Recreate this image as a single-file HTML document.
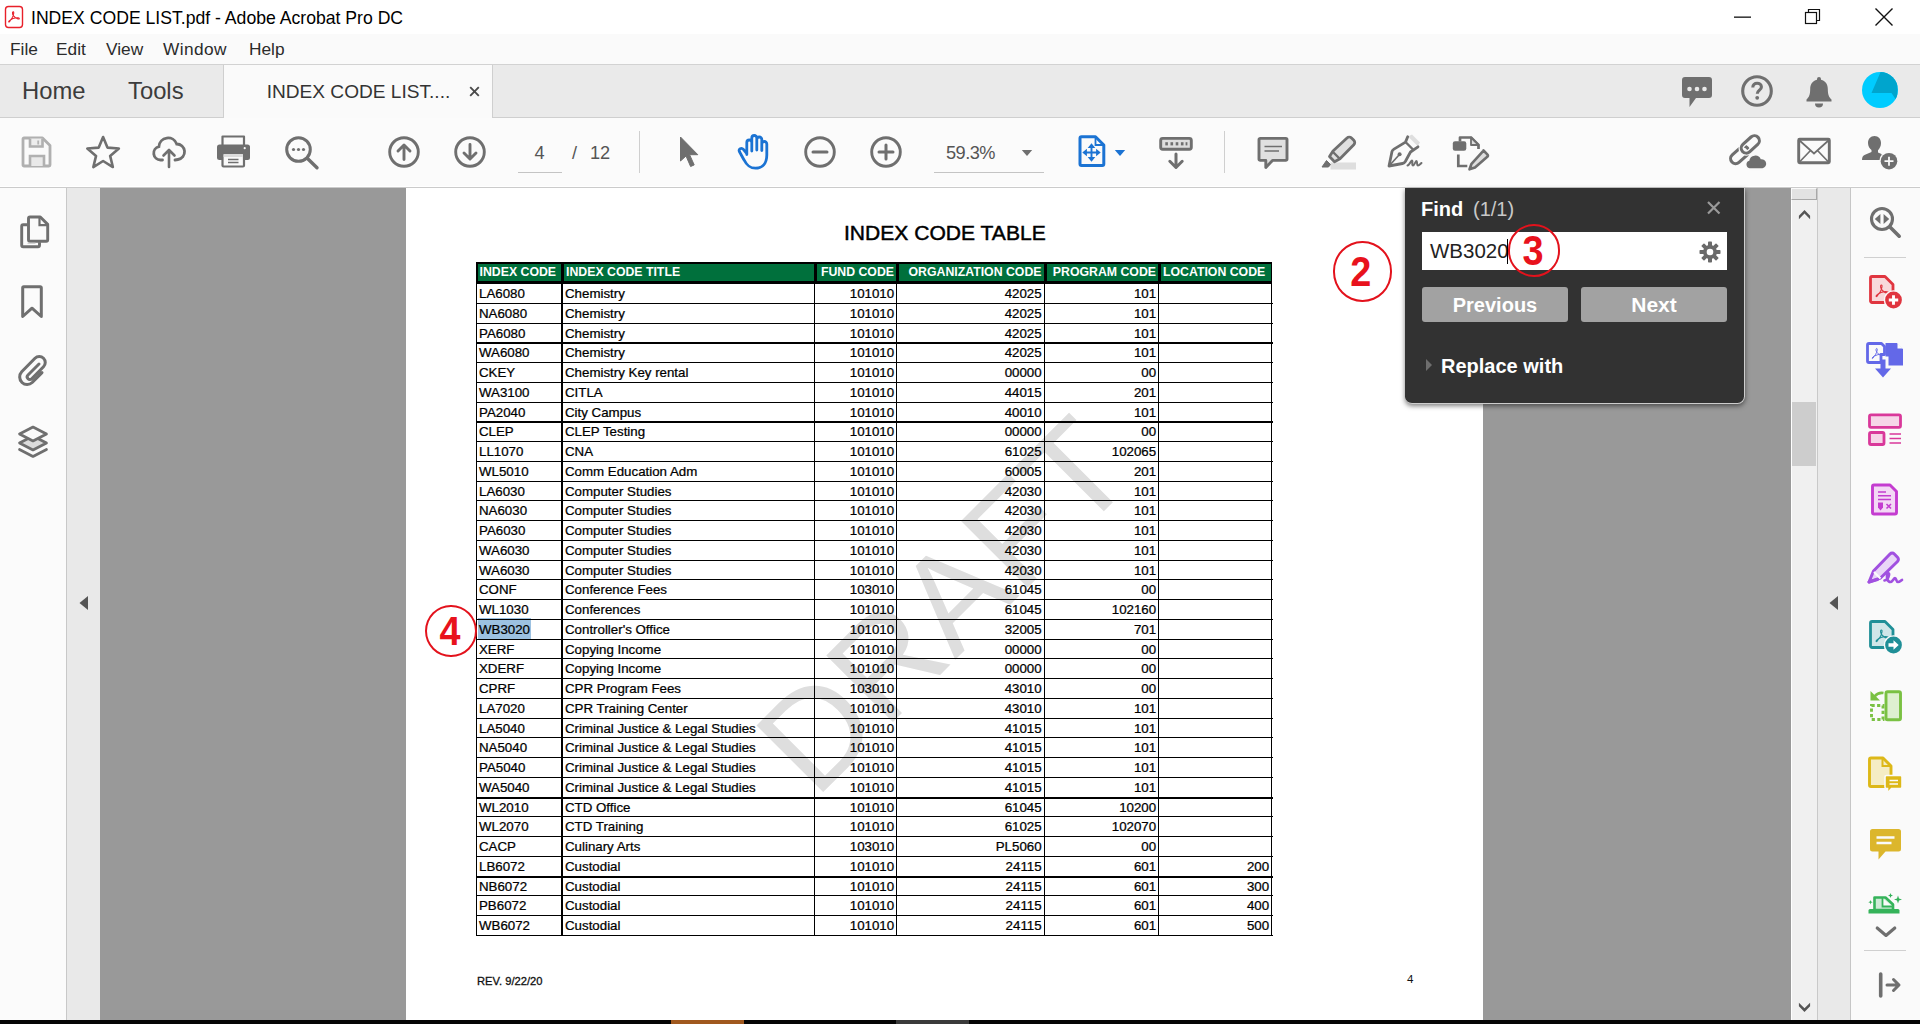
<!DOCTYPE html>
<html><head><meta charset="utf-8"><title>INDEX CODE LIST.pdf - Adobe Acrobat Pro DC</title>
<style>
*{box-sizing:border-box;margin:0;padding:0}
html,body{width:1920px;height:1024px;overflow:hidden;background:#fff;font-family:"Liberation Sans",sans-serif;color:#000}
.abs,#app div,#app span,#app svg{position:absolute}
#app{position:absolute;left:0;top:0;width:1920px;height:1024px;overflow:hidden}
/* title bar */
#title{left:0;top:0;width:1920px;height:34px;background:#fff}
#title .t{left:31px;top:6px;font-size:18.4px;transform:scaleX(.958);line-height:24px;white-space:nowrap;color:#000;transform-origin:0 50%}
/* menu */
#menu{left:0;top:34px;width:1920px;height:30px;background:#fafafa}
#menu span{top:4.2px;font-size:17.3px;line-height:22px;color:#2b2b2b;white-space:nowrap;transform-origin:0 50%}
/* tabs */
#tabs{left:0;top:64px;width:1920px;height:54px;background:#eaeaea;border-top:1px solid #d2d2d2;border-bottom:1px solid #cfcfcf}
#tabs .big{font-size:23.8px;line-height:30px;color:#3c3c3c;top:11px;white-space:nowrap;transform-origin:0 50%}
#tab1{left:222.7px;top:0px;width:270px;height:53px;background:#fafafa;border-left:1px solid #cfcfcf;border-right:1px solid #cfcfcf}
#tab1 .n{left:43px;top:13.5px;font-size:19.1px;line-height:26px;color:#333;white-space:nowrap;transform-origin:0 50%}
#tab1 .x{left:243px;top:11px;font-size:21px;line-height:26px;color:#444}
/* toolbar */
#tool{left:0;top:118px;width:1920px;height:70px;background:#fbfbfb;border-bottom:1px solid #cbcbcb;box-shadow:inset 0 -1px 0 #fff}
#tool .sep{top:13px;width:1px;height:42px;background:#cfcfcf}
#tool .tx{font-size:18.2px;line-height:22px;color:#555;white-space:nowrap;top:23.5px}
#tool .ul{height:1px;background:#c4c4c4;top:53.5px}
/* content */
#content{left:0;top:188px;width:1920px;height:832px;background:#999}
#lnav{left:0;top:0;width:67px;height:832px;background:#fbfbfb;border-right:1px solid #c8c8c8}
#lstrip{left:67px;top:0;width:33px;height:832px;background:#e9e9e9}
#page{left:406px;top:0;width:1077px;height:832px;background:#fff}
#vsb{left:1791px;top:0;width:27px;height:832px;background:#f0f0f0;border-left:1px solid #fff;border-right:1px solid #c9c9c9}
#rstrip{left:1818px;top:0;width:32px;height:832px;background:#e9e9e9}
#rnav{left:1850px;top:0;width:70px;height:832px;background:#fafafa;border-left:1px solid #c6c6c6}
#taskbar{left:0;top:1020px;width:1920px;height:4px;background:#050505}
/* table */
#tbl{left:0;top:0;width:1920px;height:1024px}
#tbl .hd{background:#000}
#tbl .hc{top:264.2px;height:16.7px;background:#00703c;overflow:visible}
#tbl .ht{top:-2.5px;font-weight:bold;font-size:12.3px;line-height:20px;color:#fff;white-space:nowrap}
#tbl .hl{left:476px;width:796.5px;background:#000}
#tbl .vl{top:284px;height:652px;background:#000}
#tbl .c{font-size:13.3px;line-height:19.75px;height:19.75px;white-space:nowrap;color:#000;-webkit-text-stroke:0.25px #000;transform:scaleY(.9);transform-origin:0 14.3px}
#tbl .hi{background:#9cc1e1}
#wm{left:0;top:0;width:1920px;height:1024px;overflow:hidden}
#wm span{left:943px;top:605px;font-size:137px;line-height:137px;color:#dedede;white-space:nowrap;transform:translate(-50%,-50%) rotate(-45deg);}
.ic{position:absolute;overflow:visible}
.red{border:2.4px solid #e3121c;border-radius:50%;color:#e8121c;font-weight:bold;text-align:center}
/* find */
#find{left:1405px;top:188px;width:339.8px;height:215.5px;background:#323232;border:1.5px solid #cdcdcd;border-top:none;border-left:none;border-radius:0 0 7.5px 7px;box-shadow:0 2px 5px rgba(0,0,0,.5)}
#find .inp{left:17px;top:44px;width:305px;height:38px;background:#fff}
#find .btn{top:98.6px;width:146px;height:35.8px;background:#a2a2a2;border-radius:3px;color:#fff;font-size:20px;line-height:36px;text-align:center;font-weight:bold}
</style></head><body><div id="app">

<div id="title">
  <svg style="left:4.3px;top:4.600px" width="21" height="25" viewBox="0 0 21 25"><rect x="1.5" y="1.5" width="17" height="21" rx="3" fill="#fff" stroke="#e8202a" stroke-width="1.4"/><path d="M5 16c2-1 4-4 4.7-7.5.4-2-.9-2.4-1.2-.9-.4 2 2 5.400 5.500 6.400 1.700.4 1.800-1 .2-1.200-2.500-.3-6.500.8-9 3-1.200 1.200 0 1.800.8.200z" fill="none" stroke="#e8202a" stroke-width="1.1"/></svg>
  <span class="t" id="ttl">INDEX CODE LIST.pdf - Adobe Acrobat Pro DC</span>
  <svg style="left:1734px;top:16px" width="18" height="3"><rect x="0" y="0.5" width="17" height="1.3" fill="#111"/></svg>
  <svg style="left:1804px;top:8px" width="18" height="18" viewBox="0 0 18 18"><rect x="1.500" y="4.500" width="11" height="11" fill="none" stroke="#111" stroke-width="1.200"/><path d="M4.500 4.500v-3h11v11h-3" fill="none" stroke="#111" stroke-width="1.200"/></svg>
  <svg style="left:1874px;top:7px" width="20" height="20" viewBox="0 0 20 20"><path d="M1.500 1.500l17 17M18.500 1.500l-17 17" stroke="#111" stroke-width="1.400" fill="none"/></svg>
</div>

<div id="menu">
  <span style="left:10px">File</span><span style="left:56px">Edit</span><span style="left:106px">View</span><span style="left:163px;letter-spacing:.4px">Window</span><span style="left:249px">Help</span>
</div>

<div id="tabs">
  <span class="big" style="left:22px">Home</span><span class="big" style="left:128px">Tools</span>
  <div id="tab1"><span class="n">INDEX CODE LIST....</span><svg style="left:245.500px;top:20.800px" width="11" height="11"><path d="M1.200 1.200l8.600 8.600M9.800 1.200l-8.600 8.600" stroke="#4a4a4a" stroke-width="1.900"/></svg></div>
  <!--TABICONS-->
</div>

<div id="tool">
  <div class="sep" style="left:639px"></div><div class="sep" style="left:1224px"></div>
  <div class="ul" style="left:518px;width:44px"></div><div class="ul" style="left:934px;width:110px"></div>
  <span class="tx" style="left:534.5px">4</span><span class="tx" style="left:572px">/</span><span class="tx" style="left:590px">12</span>
  <span class="tx" style="left:946px;letter-spacing:-0.55px">59.3%</span>
</div>

<div id="content">
  <div id="lnav"><!--LNAV--></div>
  <div id="lstrip"><svg style="left:11px;top:407px" width="11" height="16"><path d="M10 1v14L1.500 8z" fill="#555"/></svg></div>
  <div id="page"></div>
  <div id="vsb"><div style="left:-1px;top:0;width:25.500px;height:11.500px;background:#e2e2e2;border-top:1px solid #fafafa;border-left:1px solid #fafafa;border-right:1px solid #a8a8a8;border-bottom:1px solid #a8a8a8"></div>
<svg style="left:-1px;top:0" width="26" height="832"><path d="M7.900 27.700L13.500 22L19.100 27.700V31.200L13.500 25.600L7.900 31.200Z" fill="#555"/><path d="M7.900 814.700L13.500 820.300L19.100 814.700V818.300L13.500 824L7.900 818.300Z" fill="#555"/></svg>
<div style="left:0px;top:214px;width:24px;height:64px;background:#cdcdcd"></div></div>
  <div id="rstrip"><svg style="left:10px;top:407px" width="11" height="16"><path d="M10 1v14L1.500 8z" fill="#555"/></svg></div>
  <div id="rnav"><!--RNAV--></div>
</div>

<div id="wm"><span>DRAFT</span></div>
<span class="abs" id="ptitle" style="left:844px;top:220px;font-size:20px;line-height:26px;white-space:nowrap;transform-origin:0 50%;transform:scaleX(1.053);-webkit-text-stroke:0.45px #000">INDEX CODE TABLE</span>
<div id="tbl">
<div class="hd" style="left:476px;top:262px;width:796.3px;height:22px"></div>
<div class="hc" style="left:477.5px;width:83.5px;"><span class="ht" style="left:2px">INDEX CODE</span></div>
<div class="hc" style="left:564px;width:249.5px;"><span class="ht" style="left:2px">INDEX CODE TITLE</span></div>
<div class="hc" style="left:816.5px;width:79.5px;"><span class="ht" style="right:2px">FUND CODE</span></div>
<div class="hc" style="left:899px;width:144.5px;"><span class="ht" style="right:2px">ORGANIZATION CODE</span></div>
<div class="hc" style="left:1046.5px;width:111.5px;"><span class="ht" style="right:2px">PROGRAM CODE</span></div>
<div class="hc" style="left:1161px;width:109.5px;"><span class="ht" style="left:2px">LOCATION CODE</span></div>
<div class="hi" style="left:478px;top:618.3px;width:53px;height:20.5px"></div>
<div class="hl" style="top:303px;height:1px"></div>
<div class="hl" style="top:323px;height:1px"></div>
<div class="hl" style="top:342px;height:2px"></div>
<div class="hl" style="top:362px;height:1px"></div>
<div class="hl" style="top:382px;height:1px"></div>
<div class="hl" style="top:402px;height:1px"></div>
<div class="hl" style="top:421px;height:2px"></div>
<div class="hl" style="top:441px;height:1px"></div>
<div class="hl" style="top:461px;height:1px"></div>
<div class="hl" style="top:481px;height:1px"></div>
<div class="hl" style="top:500px;height:1px"></div>
<div class="hl" style="top:520px;height:1px"></div>
<div class="hl" style="top:540px;height:1px"></div>
<div class="hl" style="top:560px;height:1px"></div>
<div class="hl" style="top:579px;height:1px"></div>
<div class="hl" style="top:599px;height:1px"></div>
<div class="hl" style="top:619px;height:1px"></div>
<div class="hl" style="top:639px;height:1px"></div>
<div class="hl" style="top:658px;height:1px"></div>
<div class="hl" style="top:678px;height:1px"></div>
<div class="hl" style="top:698px;height:1px"></div>
<div class="hl" style="top:718px;height:1px"></div>
<div class="hl" style="top:737px;height:1px"></div>
<div class="hl" style="top:757px;height:1px"></div>
<div class="hl" style="top:777px;height:1px"></div>
<div class="hl" style="top:797px;height:2px"></div>
<div class="hl" style="top:816px;height:1px"></div>
<div class="hl" style="top:836px;height:1px"></div>
<div class="hl" style="top:856px;height:1px"></div>
<div class="hl" style="top:876px;height:2px"></div>
<div class="hl" style="top:895px;height:1px"></div>
<div class="hl" style="top:915px;height:1px"></div>
<div class="hl" style="top:935px;height:1px"></div>
<div class="vl" style="left:476px;width:1px"></div>
<div class="vl" style="left:561px;width:2px"></div>
<div class="vl" style="left:814px;width:1px"></div>
<div class="vl" style="left:896px;width:1px"></div>
<div class="vl" style="left:1044px;width:1px"></div>
<div class="vl" style="left:1158px;width:1px"></div>
<div class="vl" style="left:1271px;width:1px"></div>
<span class="c" style="left:479px;top:284.15px">LA6080</span>
<span class="c" style="left:565.0px;top:284.15px">Chemistry</span>
<span class="c r" style="right:1025.9px;top:284.15px">101010</span>
<span class="c r" style="right:878.4px;top:284.15px">42025</span>
<span class="c r" style="right:763.9px;top:284.15px">101</span>
<span class="c" style="left:479px;top:303.90px">NA6080</span>
<span class="c" style="left:565.0px;top:303.90px">Chemistry</span>
<span class="c r" style="right:1025.9px;top:303.90px">101010</span>
<span class="c r" style="right:878.4px;top:303.90px">42025</span>
<span class="c r" style="right:763.9px;top:303.90px">101</span>
<span class="c" style="left:479px;top:323.65px">PA6080</span>
<span class="c" style="left:565.0px;top:323.65px">Chemistry</span>
<span class="c r" style="right:1025.9px;top:323.65px">101010</span>
<span class="c r" style="right:878.4px;top:323.65px">42025</span>
<span class="c r" style="right:763.9px;top:323.65px">101</span>
<span class="c" style="left:479px;top:343.40px">WA6080</span>
<span class="c" style="left:565.0px;top:343.40px">Chemistry</span>
<span class="c r" style="right:1025.9px;top:343.40px">101010</span>
<span class="c r" style="right:878.4px;top:343.40px">42025</span>
<span class="c r" style="right:763.9px;top:343.40px">101</span>
<span class="c" style="left:479px;top:363.15px">CKEY</span>
<span class="c" style="left:565.0px;top:363.15px">Chemistry Key rental</span>
<span class="c r" style="right:1025.9px;top:363.15px">101010</span>
<span class="c r" style="right:878.4px;top:363.15px">00000</span>
<span class="c r" style="right:763.9px;top:363.15px">00</span>
<span class="c" style="left:479px;top:382.90px">WA3100</span>
<span class="c" style="left:565.0px;top:382.90px">CITLA</span>
<span class="c r" style="right:1025.9px;top:382.90px">101010</span>
<span class="c r" style="right:878.4px;top:382.90px">44015</span>
<span class="c r" style="right:763.9px;top:382.90px">201</span>
<span class="c" style="left:479px;top:402.65px">PA2040</span>
<span class="c" style="left:565.0px;top:402.65px">City Campus</span>
<span class="c r" style="right:1025.9px;top:402.65px">101010</span>
<span class="c r" style="right:878.4px;top:402.65px">40010</span>
<span class="c r" style="right:763.9px;top:402.65px">101</span>
<span class="c" style="left:479px;top:422.40px">CLEP</span>
<span class="c" style="left:565.0px;top:422.40px">CLEP Testing</span>
<span class="c r" style="right:1025.9px;top:422.40px">101010</span>
<span class="c r" style="right:878.4px;top:422.40px">00000</span>
<span class="c r" style="right:763.9px;top:422.40px">00</span>
<span class="c" style="left:479px;top:442.15px">LL1070</span>
<span class="c" style="left:565.0px;top:442.15px">CNA</span>
<span class="c r" style="right:1025.9px;top:442.15px">101010</span>
<span class="c r" style="right:878.4px;top:442.15px">61025</span>
<span class="c r" style="right:763.9px;top:442.15px">102065</span>
<span class="c" style="left:479px;top:461.90px">WL5010</span>
<span class="c" style="left:565.0px;top:461.90px">Comm Education Adm</span>
<span class="c r" style="right:1025.9px;top:461.90px">101010</span>
<span class="c r" style="right:878.4px;top:461.90px">60005</span>
<span class="c r" style="right:763.9px;top:461.90px">201</span>
<span class="c" style="left:479px;top:481.65px">LA6030</span>
<span class="c" style="left:565.0px;top:481.65px">Computer Studies</span>
<span class="c r" style="right:1025.9px;top:481.65px">101010</span>
<span class="c r" style="right:878.4px;top:481.65px">42030</span>
<span class="c r" style="right:763.9px;top:481.65px">101</span>
<span class="c" style="left:479px;top:501.40px">NA6030</span>
<span class="c" style="left:565.0px;top:501.40px">Computer Studies</span>
<span class="c r" style="right:1025.9px;top:501.40px">101010</span>
<span class="c r" style="right:878.4px;top:501.40px">42030</span>
<span class="c r" style="right:763.9px;top:501.40px">101</span>
<span class="c" style="left:479px;top:521.15px">PA6030</span>
<span class="c" style="left:565.0px;top:521.15px">Computer Studies</span>
<span class="c r" style="right:1025.9px;top:521.15px">101010</span>
<span class="c r" style="right:878.4px;top:521.15px">42030</span>
<span class="c r" style="right:763.9px;top:521.15px">101</span>
<span class="c" style="left:479px;top:540.90px">WA6030</span>
<span class="c" style="left:565.0px;top:540.90px">Computer Studies</span>
<span class="c r" style="right:1025.9px;top:540.90px">101010</span>
<span class="c r" style="right:878.4px;top:540.90px">42030</span>
<span class="c r" style="right:763.9px;top:540.90px">101</span>
<span class="c" style="left:479px;top:560.65px">WA6030</span>
<span class="c" style="left:565.0px;top:560.65px">Computer Studies</span>
<span class="c r" style="right:1025.9px;top:560.65px">101010</span>
<span class="c r" style="right:878.4px;top:560.65px">42030</span>
<span class="c r" style="right:763.9px;top:560.65px">101</span>
<span class="c" style="left:479px;top:580.40px">CONF</span>
<span class="c" style="left:565.0px;top:580.40px">Conference Fees</span>
<span class="c r" style="right:1025.9px;top:580.40px">103010</span>
<span class="c r" style="right:878.4px;top:580.40px">61045</span>
<span class="c r" style="right:763.9px;top:580.40px">00</span>
<span class="c" style="left:479px;top:600.15px">WL1030</span>
<span class="c" style="left:565.0px;top:600.15px">Conferences</span>
<span class="c r" style="right:1025.9px;top:600.15px">101010</span>
<span class="c r" style="right:878.4px;top:600.15px">61045</span>
<span class="c r" style="right:763.9px;top:600.15px">102160</span>
<span class="c" style="left:479px;top:619.90px">WB3020</span>
<span class="c" style="left:565.0px;top:619.90px">Controller's Office</span>
<span class="c r" style="right:1025.9px;top:619.90px">101010</span>
<span class="c r" style="right:878.4px;top:619.90px">32005</span>
<span class="c r" style="right:763.9px;top:619.90px">701</span>
<span class="c" style="left:479px;top:639.65px">XERF</span>
<span class="c" style="left:565.0px;top:639.65px">Copying Income</span>
<span class="c r" style="right:1025.9px;top:639.65px">101010</span>
<span class="c r" style="right:878.4px;top:639.65px">00000</span>
<span class="c r" style="right:763.9px;top:639.65px">00</span>
<span class="c" style="left:479px;top:659.40px">XDERF</span>
<span class="c" style="left:565.0px;top:659.40px">Copying Income</span>
<span class="c r" style="right:1025.9px;top:659.40px">101010</span>
<span class="c r" style="right:878.4px;top:659.40px">00000</span>
<span class="c r" style="right:763.9px;top:659.40px">00</span>
<span class="c" style="left:479px;top:679.15px">CPRF</span>
<span class="c" style="left:565.0px;top:679.15px">CPR Program Fees</span>
<span class="c r" style="right:1025.9px;top:679.15px">103010</span>
<span class="c r" style="right:878.4px;top:679.15px">43010</span>
<span class="c r" style="right:763.9px;top:679.15px">00</span>
<span class="c" style="left:479px;top:698.90px">LA7020</span>
<span class="c" style="left:565.0px;top:698.90px">CPR Training Center</span>
<span class="c r" style="right:1025.9px;top:698.90px">101010</span>
<span class="c r" style="right:878.4px;top:698.90px">43010</span>
<span class="c r" style="right:763.9px;top:698.90px">101</span>
<span class="c" style="left:479px;top:718.65px">LA5040</span>
<span class="c" style="left:565.0px;top:718.65px">Criminal Justice &amp; Legal Studies</span>
<span class="c r" style="right:1025.9px;top:718.65px">101010</span>
<span class="c r" style="right:878.4px;top:718.65px">41015</span>
<span class="c r" style="right:763.9px;top:718.65px">101</span>
<span class="c" style="left:479px;top:738.40px">NA5040</span>
<span class="c" style="left:565.0px;top:738.40px">Criminal Justice &amp; Legal Studies</span>
<span class="c r" style="right:1025.9px;top:738.40px">101010</span>
<span class="c r" style="right:878.4px;top:738.40px">41015</span>
<span class="c r" style="right:763.9px;top:738.40px">101</span>
<span class="c" style="left:479px;top:758.15px">PA5040</span>
<span class="c" style="left:565.0px;top:758.15px">Criminal Justice &amp; Legal Studies</span>
<span class="c r" style="right:1025.9px;top:758.15px">101010</span>
<span class="c r" style="right:878.4px;top:758.15px">41015</span>
<span class="c r" style="right:763.9px;top:758.15px">101</span>
<span class="c" style="left:479px;top:777.90px">WA5040</span>
<span class="c" style="left:565.0px;top:777.90px">Criminal Justice &amp; Legal Studies</span>
<span class="c r" style="right:1025.9px;top:777.90px">101010</span>
<span class="c r" style="right:878.4px;top:777.90px">41015</span>
<span class="c r" style="right:763.9px;top:777.90px">101</span>
<span class="c" style="left:479px;top:797.65px">WL2010</span>
<span class="c" style="left:565.0px;top:797.65px">CTD Office</span>
<span class="c r" style="right:1025.9px;top:797.65px">101010</span>
<span class="c r" style="right:878.4px;top:797.65px">61045</span>
<span class="c r" style="right:763.9px;top:797.65px">10200</span>
<span class="c" style="left:479px;top:817.40px">WL2070</span>
<span class="c" style="left:565.0px;top:817.40px">CTD Training</span>
<span class="c r" style="right:1025.9px;top:817.40px">101010</span>
<span class="c r" style="right:878.4px;top:817.40px">61025</span>
<span class="c r" style="right:763.9px;top:817.40px">102070</span>
<span class="c" style="left:479px;top:837.15px">CACP</span>
<span class="c" style="left:565.0px;top:837.15px">Culinary Arts</span>
<span class="c r" style="right:1025.9px;top:837.15px">103010</span>
<span class="c r" style="right:878.4px;top:837.15px">PL5060</span>
<span class="c r" style="right:763.9px;top:837.15px">00</span>
<span class="c" style="left:479px;top:856.90px">LB6072</span>
<span class="c" style="left:565.0px;top:856.90px">Custodial</span>
<span class="c r" style="right:1025.9px;top:856.90px">101010</span>
<span class="c r" style="right:878.4px;top:856.90px">24115</span>
<span class="c r" style="right:763.9px;top:856.90px">601</span>
<span class="c r" style="right:650.9px;top:856.90px">200</span>
<span class="c" style="left:479px;top:876.65px">NB6072</span>
<span class="c" style="left:565.0px;top:876.65px">Custodial</span>
<span class="c r" style="right:1025.9px;top:876.65px">101010</span>
<span class="c r" style="right:878.4px;top:876.65px">24115</span>
<span class="c r" style="right:763.9px;top:876.65px">601</span>
<span class="c r" style="right:650.9px;top:876.65px">300</span>
<span class="c" style="left:479px;top:896.40px">PB6072</span>
<span class="c" style="left:565.0px;top:896.40px">Custodial</span>
<span class="c r" style="right:1025.9px;top:896.40px">101010</span>
<span class="c r" style="right:878.4px;top:896.40px">24115</span>
<span class="c r" style="right:763.9px;top:896.40px">601</span>
<span class="c r" style="right:650.9px;top:896.40px">400</span>
<span class="c" style="left:479px;top:916.15px">WB6072</span>
<span class="c" style="left:565.0px;top:916.15px">Custodial</span>
<span class="c r" style="right:1025.9px;top:916.15px">101010</span>
<span class="c r" style="right:878.4px;top:916.15px">24115</span>
<span class="c r" style="right:763.9px;top:916.15px">601</span>
<span class="c r" style="right:650.9px;top:916.15px">500</span>
</div>
<span class="abs" style="left:477px;top:975px;font-size:11.2px;line-height:13px;white-space:nowrap;color:#111;-webkit-text-stroke:0.3px #111">REV. 9/22/20</span>
<span class="abs" style="left:1407px;top:972px;font-size:11.5px;line-height:14px;color:#111">4</span>

<svg class="ic" style="left:21px;top:136px" width="32" height="32" viewBox="0 0 32 32" ><path d="M3 2h18.500l7.500 7.500v19.500a1 1 0 0 1-1 1h-25a1 1 0 0 1-1-1v-26a1 1 0 0 1 1-1z" fill="#fafafa" stroke="#b0b0b0" stroke-width="2.800" stroke-linejoin="round"/><path d="M9 2.500v8h12.500v-8" fill="#ededed" stroke="#b0b0b0" stroke-width="2.600"/><rect x="16.300" y="4.500" width="1.800" height="4" fill="#b4b4b4"/><path d="M9 30v-10h14v10" fill="#e9e9e9" stroke="#b0b0b0" stroke-width="2.600"/></svg>
<svg class="ic" style="left:84px;top:133px" width="38" height="38" viewBox="0 0 38 38" ><polygon points="19.10,4.00 23.45,14.61 34.89,15.47 26.14,22.89 28.86,34.03 19.10,28.00 9.34,34.03 12.06,22.89 3.31,15.47 14.75,14.61" fill="none" stroke="#6f6f6f" stroke-width="2.600" stroke-linejoin="round"/></svg>
<svg class="ic" style="left:151px;top:133px" width="36" height="38" viewBox="0 0 36 38" ><path d="M11.500 27h-2a6.800 6.800 0 0 1-1.600-13.400a9.200 9.200 0 0 1 17.800-2.600a7.800 7.800 0 0 1 1.300 15.500l-3 .5" fill="none" stroke="#6f6f6f" stroke-width="2.800" stroke-linecap="round"/><path d="M18 34v-16.500M12.500 22.500l5.500-5.500l5.500 5.500" fill="none" stroke="#6f6f6f" stroke-width="2.600" stroke-linecap="round" stroke-linejoin="round"/></svg>
<svg class="ic" style="left:216px;top:134px" width="35" height="35" viewBox="0 0 35 35" ><path d="M6.500 11v-8.500h21.500v8.500" fill="none" stroke="#6f6f6f" stroke-width="2.200" stroke-linejoin="round"/><rect x="1" y="10.500" width="33" height="15.500" rx="2.500" fill="#6f6f6f"/><rect x="6.500" y="19.500" width="21.500" height="13" rx="1" fill="#fafafa" stroke="#6f6f6f" stroke-width="2.200"/><rect x="7.600" y="20" width="19.300" height="3" fill="#dcdcdc"/><path d="M12 25.500h10.500M12 28.500h10.500" stroke="#6f6f6f" stroke-width="1.300"/><circle cx="28.700" cy="14.200" r="1.100" fill="#fafafa"/></svg>
<svg class="ic" style="left:283px;top:134px" width="38" height="38" viewBox="0 0 38 38" ><circle cx="15.500" cy="15.500" r="11.800" fill="none" stroke="#6f6f6f" stroke-width="3"/><path d="M24.500 24.500l9.500 9.300" stroke="#6f6f6f" stroke-width="3.400" stroke-linecap="round"/><circle cx="10.500" cy="15.500" r="1.600" fill="#6f6f6f"/><circle cx="15.500" cy="15.500" r="1.600" fill="#6f6f6f"/><circle cx="20.500" cy="15.500" r="1.600" fill="#6f6f6f"/></svg>
<svg class="ic" style="left:386.1px;top:133.7px" width="36" height="36" viewBox="0 0 36 36" ><circle cx="18" cy="18" r="14.300" fill="none" stroke="#6f6f6f" stroke-width="2.900"/><path d="M18 25.500v-14M12 17l6-6l6 6" fill="none" stroke="#6f6f6f" stroke-width="2.900" stroke-linecap="round" stroke-linejoin="round"/></svg>
<svg class="ic" style="left:452px;top:133.7px" width="36" height="36" viewBox="0 0 36 36" ><circle cx="18" cy="18" r="14.300" fill="none" stroke="#6f6f6f" stroke-width="2.900"/><path d="M18 10.500v14M12 19l6 6l6-6" fill="none" stroke="#6f6f6f" stroke-width="2.900" stroke-linecap="round" stroke-linejoin="round"/></svg>
<svg class="ic" style="left:801.7px;top:133.5px" width="36" height="36" viewBox="0 0 36 36" ><circle cx="18" cy="18" r="14.300" fill="none" stroke="#6f6f6f" stroke-width="2.900"/><path d="M11 18h14" stroke="#6f6f6f" stroke-width="3" stroke-linecap="round"/></svg>
<svg class="ic" style="left:867.5px;top:133.5px" width="36" height="36" viewBox="0 0 36 36" ><circle cx="18" cy="18" r="14.300" fill="none" stroke="#6f6f6f" stroke-width="2.900"/><path d="M11 18h14M18 11v14" stroke="#6f6f6f" stroke-width="3" stroke-linecap="round"/></svg>
<svg class="ic" style="left:678px;top:135px" width="24" height="34" viewBox="0 0 24 34" ><path d="M2.500 2v24l5.500-5l4.600 10.500l3.600-1.600l-4.600-10.200h8.200z" fill="#6f6f6f" stroke="#6f6f6f" stroke-width="1" stroke-linejoin="round"/></svg>
<svg class="ic" style="left:735px;top:133px" width="38" height="38" viewBox="0 0 38 38" ><path d="M11.800 21.500v-12a2.500 2.500 0 0 1 5 0v8.500M16.800 17.500v-12.500a2.500 2.500 0 0 1 5 0v12M21.800 17v-10.500a2.500 2.500 0 0 1 5 0v11M26.800 17.500v-6.500a2.500 2.500 0 0 1 5 0v11c0 8.500-4.500 13.200-11.300 13.200c-6 0-8.800-3-11.600-8.500l-4.400-7.900c-1.400-2.800 2-4.500 3.900-2.400l3.400 4.200" fill="none" stroke="#1b73d3" stroke-width="2.800" stroke-linecap="round" stroke-linejoin="round"/></svg>
<svg class="ic" style="left:1021px;top:149px" width="12" height="8" viewBox="0 0 12 8" ><path d="M0.800 1h10.400l-5.200 6z" fill="#6f6f6f"/></svg>
<svg class="ic" style="left:1113.5px;top:149px" width="12" height="8" viewBox="0 0 12 8" ><path d="M0.800 1h10.400l-5.200 6z" fill="#1b73d3"/></svg>
<svg class="ic" style="left:1077px;top:134px" width="30" height="35" viewBox="0 0 30 35" ><path d="M4.500 2.700h14l8.300 8.300v19a1.500 1.500 0 0 1-1.500 1.500h-20.800a1.500 1.500 0 0 1-1.500-1.500v-25.800a1.500 1.500 0 0 1 1.500-1.500z" fill="#fafafa" stroke="#1b73d3" stroke-width="3" stroke-linejoin="round"/><path d="M18.500 3v8h8" fill="none" stroke="#1b73d3" stroke-width="1.800"/><path d="M14.500 9.300l3.800 4.600h-7.600zM14.500 27.700l3.800-4.600h-7.600zM5.300 18.500l4.600-3.800v7.600zM23.700 18.500l-4.600-3.800v7.600z" fill="#1b73d3"/><path d="M14.500 12.500v12M8.500 18.500h12" stroke="#1b73d3" stroke-width="1.900"/></svg>
<svg class="ic" style="left:1158px;top:135px" width="36" height="36" viewBox="0 0 36 36" ><rect x="2.700" y="3.400" width="30.600" height="10.800" rx="2" fill="#dedede" stroke="#6f6f6f" stroke-width="2.900"/><rect x="7.300" y="7.200" width="2.600" height="3.200" fill="#6f6f6f"/><rect x="12.500" y="7.200" width="2.600" height="3.200" fill="#6f6f6f"/><rect x="17.700" y="7.200" width="2.600" height="3.200" fill="#6f6f6f"/><rect x="22.900" y="7.200" width="2.600" height="3.200" fill="#6f6f6f"/><rect x="27.600" y="7.200" width="1.800" height="3.200" fill="#6f6f6f"/><path d="M18 19v13M11.800 26.300l6.200 6.200l6.200-6.200" fill="none" stroke="#6f6f6f" stroke-width="3" stroke-linecap="round" stroke-linejoin="round"/></svg>
<svg class="ic" style="left:1256px;top:135px" width="34" height="36" viewBox="0 0 34 36" ><path d="M4.200 3.400h25.600a1.200 1.200 0 0 1 1.200 1.200v19.600a1.200 1.200 0 0 1-1.200 1.200h-13.300l-6.700 7v-7h-5.600a1.200 1.200 0 0 1-1.200-1.200v-19.600a1.200 1.200 0 0 1 1.200-1.200z" fill="#e0e0e0" stroke="#6f6f6f" stroke-width="2.900" stroke-linejoin="round"/><path d="M8.500 11.500h17.500M8.500 16h14.500" stroke="#6f6f6f" stroke-width="1.500"/></svg>
<svg class="ic" style="left:1320px;top:134.8px" width="38" height="36" viewBox="0 0 38 36" ><rect x="10.500" y="27.500" width="25.500" height="7" fill="#dedede"/><path d="M9.500 21.500l3.500-5.500l14-13a3.200 3.200 0 0 1 4.500 0l2.300 2.300a3.200 3.200 0 0 1 0 4.500l-13.800 14l-5.500 3z" fill="#e0e0e0" stroke="#6f6f6f" stroke-width="2.800" stroke-linejoin="round"/><path d="M12.500 16.500l7.500 7.500" stroke="#6f6f6f" stroke-width="2.400"/><path d="M6.500 25.500l4 4l-2 2.500h-6.500z" fill="#6f6f6f" stroke="#6f6f6f" stroke-width="1" stroke-linejoin="round"/></svg>
<svg class="ic" style="left:1386px;top:134px" width="38" height="36" viewBox="0 0 38 36" ><path d="M22 2.500l9.500 9.500l2.500-3.500l-8-8z" fill="#dedede"/><path d="M3 32l3-14.500c.3-1.200 1-1.800 2-2.400l11.500-7l2.200-5.300M3 32l13.500-2.500c1.500-.3 2.200-1 2.800-2l5.200-9.500l7.500-5.200" fill="none" stroke="#6f6f6f" stroke-width="2.800" stroke-linejoin="round" stroke-linecap="round"/><path d="M19.500 8l7.500 7.500" stroke="#6f6f6f" stroke-width="2.400"/><path d="M3.500 31.500l9.500-10.500" stroke="#6f6f6f" stroke-width="1.700"/><circle cx="13.600" cy="20.300" r="2" fill="#6f6f6f"/><path d="M21.500 31.500c2-.5 3.500-5 4.500-5s-.5 5 1 5s2.500-4.500 3.500-4.500s0 4.500 1.500 4.500s2.500-2 3.500-2.500" fill="none" stroke="#6f6f6f" stroke-width="2" stroke-linecap="round"/></svg>
<svg class="ic" style="left:1451px;top:134px" width="40" height="38" viewBox="0 0 40 38" ><path d="M9 7.500v-4h11l7.500 7.500v4" fill="none" stroke="#6f6f6f" stroke-width="2.700" stroke-linejoin="round"/><path d="M20 3.500v7.500h7.500z" fill="#dedede" stroke="#6f6f6f" stroke-width="1.800" stroke-linejoin="round"/><rect x="1.800" y="7.300" width="13.500" height="9.500" rx="2.200" fill="#6f6f6f"/><path d="M7.300 20.500v11.500h9" fill="none" stroke="#6f6f6f" stroke-width="2.700"/><path d="M32.500 16.500l3.800 3.800a1.800 1.800 0 0 1 0 2.500l-12.300 10.700l-5.500 1.800l2-5.500l11.800-13a1 1 0 0 1 .2-.3z" fill="#dedede" stroke="#6f6f6f" stroke-width="2.600" stroke-linejoin="round"/><path d="M18.300 35.500l1.600-4l2.500 2.500z" fill="#6f6f6f"/></svg>
<svg class="ic" style="left:1728px;top:134px" width="40" height="36" viewBox="0 0 40 36" ><rect x="-10.500" y="-5" width="21" height="10" rx="5" transform="translate(11.700,21) rotate(-42)" fill="none" stroke="#6f6f6f" stroke-width="3.100"/><rect x="-10.500" y="-5" width="21" height="10" rx="5" transform="translate(22.300,10.400) rotate(-42)" fill="none" stroke="#fafafa" stroke-width="5.500"/><rect x="-10.500" y="-5" width="21" height="10" rx="5" transform="translate(22.300,10.400) rotate(-42)" fill="none" stroke="#6f6f6f" stroke-width="3.100"/><path d="M21.500 35.500a4.200 4.200 0 0 1-.5-8.200a6.200 6.200 0 0 1 12-1.800a4.800 4.800 0 0 1 1.500 10z" fill="#fafafa" stroke="#fafafa" stroke-width="2"/><path d="M21.500 34.200a3.800 3.800 0 0 1-.2-7.400a6 6 0 0 1 11.500-1.500a4.500 4.500 0 0 1 1.700 8.900z" fill="#6f6f6f"/></svg>
<svg class="ic" style="left:1796px;top:136px" width="36" height="30" viewBox="0 0 36 30" ><rect x="2.700" y="3.200" width="30.600" height="23.600" rx="1" fill="none" stroke="#6f6f6f" stroke-width="2.900"/><path d="M3 4l15 13.500l15-13.500M3 26.500l11.500-12M33 26.500l-11.500-12" fill="none" stroke="#6f6f6f" stroke-width="1.700"/></svg>
<svg class="ic" style="left:1860px;top:134px" width="40" height="38" viewBox="0 0 40 38" ><path d="M14.500 2c4 0 6.500 3 6.500 7c0 3-1.200 5.500-3 7.200v2.300l7 3c1.500.7 2.500 2.500 2.500 4.500h-25.500c0-3 1-4.500 3-5.300l6.500-2.800v-2c-1.800-1.500-3.500-3.500-3.500-7c0-4 2.500-6.900 6.500-6.900z" fill="#6f6f6f"/><circle cx="29" cy="27.200" r="9.800" fill="#fafafa"/><circle cx="29" cy="27.200" r="8.300" fill="#6f6f6f"/><path d="M24.500 27.200h9M29 22.700v9" stroke="#fafafa" stroke-width="1.800"/></svg>
<svg class="ic" style="left:1680px;top:75px" width="34" height="34" viewBox="0 0 34 34" ><path d="M5 2h24a3 3 0 0 1 3 3v15a3 3 0 0 1-3 3h-13l-6.500 9v-9h-4.500a3 3 0 0 1-3-3v-15a3 3 0 0 1 3-3z" fill="#6f6f6f"/><circle cx="9.500" cy="14" r="2.300" fill="#eaeaea"/><circle cx="17" cy="14" r="2.300" fill="#eaeaea"/><circle cx="24.500" cy="14" r="2.300" fill="#eaeaea"/></svg>
<svg class="ic" style="left:1739.4px;top:72.6px" width="36" height="36" viewBox="0 0 36 36" ><circle cx="18" cy="18" r="14.300" fill="none" stroke="#6f6f6f" stroke-width="3.100"/><path d="M13.800 14.400c0-2.700 1.900-4.200 4.300-4.200s4.300 1.400 4.300 3.700c0 3.200-4.100 3.300-4.100 6.800" fill="none" stroke="#6f6f6f" stroke-width="3.100"/><circle cx="18.200" cy="24.800" r="1.900" fill="#6f6f6f"/></svg>
<svg class="ic" style="left:1804px;top:75px" width="30" height="34" viewBox="0 0 30 34" ><path d="M15 2a2 2 0 0 1 2 2v.8c4.500 1 6.800 4.700 6.800 9.200c0 6 1.500 8.500 3.700 10.500v2h-25v-2c2.200-2 3.700-4.500 3.700-10.500c0-4.500 2.300-8.200 6.800-9.200v-.8a2 2 0 0 1 2-2z" fill="#6f6f6f"/><path d="M11 28.500h8a4 4 0 0 1-8 0z" fill="#6f6f6f"/></svg>
<svg class="ic" style="left:1861px;top:71px" width="38" height="38" viewBox="0 0 38 38" ><defs><clipPath id="avc"><circle cx="19" cy="19" r="18"/></clipPath></defs><circle cx="19" cy="19" r="18" fill="#00ccff"/><path d="M20 0l-9.500 22h20l6 9v-31z" fill="#00a5cd" clip-path="url(#avc)"/></svg>
<svg class="ic" style="left:18px;top:213px" width="34" height="38" viewBox="0 0 34 38" ><path d="M9.500 11.700h-4.300a1.500 1.500 0 0 0-1.500 1.500v19a1.500 1.500 0 0 0 1.500 1.500h14.800a1.500 1.500 0 0 0 1.500-1.500v-3" fill="none" stroke="#6f6f6f" stroke-width="2.900"/><path d="M12 4h10.300l7.400 7.400v15.400a1.500 1.500 0 0 1-1.500 1.500h-16.200a1.500 1.500 0 0 1-1.500-1.500v-21.300a1.500 1.500 0 0 1 1.500-1.500z" fill="#fafafa" stroke="#6f6f6f" stroke-width="2.900" stroke-linejoin="round"/><path d="M21.500 4.500v7.700h7.700" fill="none" stroke="#6f6f6f" stroke-width="2.200"/><path d="M9.500 30.300h8" stroke="#d0d0d0" stroke-width="1.200"/></svg>
<svg class="ic" style="left:19px;top:283px" width="28" height="38" viewBox="0 0 28 38" ><path d="M4.700 3.700h16.600a1 1 0 0 1 1 1v28.800l-9.300-8.300l-9.300 8.300v-28.800a1 1 0 0 1 1-1z" fill="none" stroke="#6f6f6f" stroke-width="3" stroke-linejoin="round"/></svg>
<svg class="ic" style="left:15px;top:352px" width="34" height="36" viewBox="0 0 34 36" ><path d="M24 12l-11 11a2.600 2.600 0 0 0 3.700 3.700l11.800-12a6 6 0 0 0-8.500-8.500l-13.300 13.500a7.800 7.800 0 0 0 .3 10.800c3 2.900 7.400 2.700 10.200 0l9.800-9.900" fill="none" stroke="#6f6f6f" stroke-width="3" stroke-linecap="round"/></svg>
<svg class="ic" style="left:15px;top:423px" width="36" height="40" viewBox="0 0 36 40" ><path d="M4.500 26.500l13.500 7l13.500-7" fill="none" stroke="#6f6f6f" stroke-width="2.700" stroke-linejoin="round" stroke-linecap="round"/><path d="M18 13l-13.500 7l13.500 7l13.500-7z" fill="#dcdcdc" stroke="#6f6f6f" stroke-width="2.700" stroke-linejoin="round"/><path d="M18 4l-13.500 7l13.500 7l13.500-7z" fill="#fafafa" stroke="#6f6f6f" stroke-width="2.700" stroke-linejoin="round"/></svg>
<svg class="ic" style="left:1868px;top:205px" width="36" height="36" viewBox="0 0 36 36" ><circle cx="14" cy="14" r="10.500" fill="none" stroke="#6f6f6f" stroke-width="3.100"/><path d="M22.200 22.200l9 9" stroke="#6f6f6f" stroke-width="3.600" stroke-linecap="round"/><path d="M12.400 9v10l-5.600-5zM15.600 9v10l5.600-5z" fill="#6f6f6f"/></svg>
<div class="abs" style="left:1864px;top:257px;width:42px;height:1px;background:#d0d0d0"></div>
<div class="abs" style="left:1864px;top:950px;width:42px;height:1px;background:#d0d0d0"></div>
<svg class="ic" style="left:1867px;top:273px" width="38" height="38" viewBox="0 0 38 38" ><path d="M5 3.500h13l8 8v16.500a1.500 1.500 0 0 1-1.500 1.500h-19.500a1.500 1.500 0 0 1-1.500-1.500v-23a1.500 1.500 0 0 1 1.500-1.500z" fill="#f8d9db" stroke="#e0353f" stroke-width="2.800" stroke-linejoin="round"/><path d="M0 9.500c2.200-1 4.300-4.300 5-7.800c.4-2-1-2.300-1.300-.8c-.4 2.200 2.200 5.600 5.800 6.500c1.800.4 1.900-1.100.2-1.300c-2.700-.3-6.900.9-9.500 3.200c-1.300 1.300 0 1.900.8.200z" transform="translate(9.500,12) scale(1.100)" fill="none" stroke="#e0353f" stroke-width="1"/><circle cx="26.500" cy="27" r="9.800" fill="#fafafa"/><circle cx="26.500" cy="27" r="8.400" fill="#e0353f"/><path d="M21.800 27h9.400M26.500 22.300v9.400" stroke="#fff" stroke-width="2.900"/></svg>
<svg class="ic" style="left:1865px;top:340px" width="42" height="42" viewBox="0 0 42 42" ><path d="M4 3.500h12.500l3 3v8h-3.500v8h-12a1.500 1.500 0 0 1-1.500-1.500v-16a1.500 1.500 0 0 1 1.500-1.500z" fill="#fafafa" stroke="#6368e8" stroke-width="2.800" stroke-linejoin="round"/><path d="M0 9.500c2.200-1 4.300-4.300 5-7.800c.4-2-1-2.300-1.300-.8c-.4 2.200 2.200 5.600 5.800 6.500c1.800.4 1.900-1.100.2-1.300c-2.700-.3-6.900.9-9.500 3.200c-1.300 1.300 0 1.900.8.200z" transform="translate(7.500,8.500) scale(0.950)" fill="none" stroke="#6368e8" stroke-width="1"/><path d="M20.500 3h11.500l6 6v16.500h-14.500v-9h-3z" fill="#6368e8"/><path d="M32.500 3v5.500h5.500z" fill="#fafafa"/><path d="M15.500 19.500h5v9h5.500l-8 9l-8-9h5.500z" fill="#6368e8"/></svg>
<svg class="ic" style="left:1866px;top:411px" width="38" height="38" viewBox="0 0 38 38" ><rect x="3.500" y="3.800" width="31" height="12.500" rx="1.500" fill="#f6d5e8" stroke="#d9389a" stroke-width="2.800"/><rect x="3.500" y="21.500" width="14.500" height="12" rx="1.500" fill="#f6d5e8" stroke="#d9389a" stroke-width="2.800"/><path d="M23.500 23h11.500M23.500 27.500h11.500M23.500 32h11.500" stroke="#d9389a" stroke-width="1.400"/></svg>
<svg class="ic" style="left:1869px;top:481px" width="34" height="38" viewBox="0 0 34 38" ><path d="M5 4h16l6.500 6.500v21a1.500 1.500 0 0 1-1.500 1.500h-21a1.500 1.500 0 0 1-1.500-1.500v-26a1.500 1.500 0 0 1 1.500-1.500z" fill="#f3d8f5" stroke="#c43cd0" stroke-width="2.900" stroke-linejoin="round"/><path d="M9 11h8M9 14.800h13M9 18.600h13" stroke="#c43cd0" stroke-width="1.500"/><path d="M9 21.500h5v5l-2.500 3l-2.500-3z" fill="#c43cd0"/><path d="M17.500 23l4.500 4.500M22 23l-4.500 4.500" stroke="#c43cd0" stroke-width="1.600"/></svg>
<svg class="ic" style="left:1865px;top:549px" width="42" height="40" viewBox="0 0 42 40" ><path d="M4 33l4.500-11l16.500-17a3 3 0 0 1 4.300 0l3.200 3.200a3 3 0 0 1 0 4.300l-17 16.500z" fill="#e9d6f7" stroke="#a150e0" stroke-width="3" stroke-linejoin="round"/><path d="M9 23l6.500 6.500" stroke="#fafafa" stroke-width="2.200"/><path d="M4 33l8.500-2.500" stroke="#a150e0" stroke-width="3" stroke-linecap="round"/><path d="M19.500 31.500c2.500-.5 4-3 4.500-5.500s-1.800-2-2 .5s.8 6.500 3.300 6.500s3.200-3.800 4.700-3.800s1 3.800 3 3.800s2.500-1.500 4-2" fill="none" stroke="#a150e0" stroke-width="2.700" stroke-linecap="round"/></svg>
<svg class="ic" style="left:1867px;top:618px" width="38" height="40" viewBox="0 0 38 40" ><path d="M5 3.500h13l8 8v16.500a1.500 1.500 0 0 1-1.500 1.500h-19.500a1.500 1.500 0 0 1-1.500-1.500v-23a1.500 1.500 0 0 1 1.500-1.500z" fill="#cfe6e8" stroke="#1f8f97" stroke-width="2.800" stroke-linejoin="round"/><path d="M0 9.500c2.200-1 4.300-4.300 5-7.800c.4-2-1-2.300-1.300-.8c-.4 2.200 2.200 5.600 5.800 6.500c1.800.4 1.900-1.100.2-1.300c-2.700-.3-6.900.9-9.500 3.200c-1.300 1.300 0 1.900.8.200z" transform="translate(9.500,12) scale(1.100)" fill="none" stroke="#1f8f97" stroke-width="1"/><circle cx="26.500" cy="27" r="9.800" fill="#fafafa"/><circle cx="26.500" cy="27" r="8.400" fill="#1f8f97"/><path d="M21.500 25.300h5v-3l5.200 4.700l-5.200 4.700v-3h-5z" fill="#fff"/></svg>
<svg class="ic" style="left:1868px;top:688px" width="38" height="36" viewBox="0 0 38 36" ><rect x="18" y="3.800" width="14.500" height="28" rx="1.500" fill="#def0d0" stroke="#7ac143" stroke-width="2.900"/><path d="M3.500 17.500h11.500v14h-11.500z" fill="none" stroke="#7ac143" stroke-width="2.900" stroke-dasharray="3.200 2.400"/><path d="M2.500 3v9.500h9.500z" fill="#7ac143"/><path d="M6.500 8.500c2.500-3 6-4 9-3.500" fill="none" stroke="#7ac143" stroke-width="2.600"/></svg>
<svg class="ic" style="left:1866px;top:754px" width="40" height="42" viewBox="0 0 40 42" ><path d="M5 4h12l8 8v19a1.500 1.500 0 0 1-1.500 1.500h-18.500a1.500 1.500 0 0 1-1.500-1.500v-25.500a1.500 1.500 0 0 1 1.500-1.500z" fill="#f5edc4" stroke="#ddb818" stroke-width="2.900" stroke-linejoin="round"/><path d="M16.500 4v8h8" fill="none" stroke="#ddb818" stroke-width="2"/><path d="M20.500 21.500h14a1.500 1.500 0 0 1 1.500 1.500v10a1.500 1.500 0 0 1-1.500 1.500h-9l-4 4.500v-4.500h-1a1.500 1.500 0 0 1-1.500-1.500v-10a1.500 1.500 0 0 1 1.500-1.500z" fill="#ddb818" stroke="#fafafa" stroke-width="1.600"/><path d="M23.500 26.500h8.500M23.500 30h8.500" stroke="#fafafa" stroke-width="1.600"/></svg>
<svg class="ic" style="left:1868px;top:826px" width="36" height="38" viewBox="0 0 36 38" ><path d="M4.500 3h26a2.500 2.500 0 0 1 2.500 2.500v17.500a2.500 2.500 0 0 1-2.500 2.500h-13l-7 8v-8h-6a2.500 2.500 0 0 1-2.500-2.500v-17.500a2.500 2.500 0 0 1 2.500-2.500z" fill="#dcb62c"/><path d="M8.500 11.500h18M8.500 17h15" stroke="#fafafa" stroke-width="2.600"/></svg>
<svg class="ic" style="left:1866px;top:892px" width="40" height="24" viewBox="0 0 40 24" ><path d="M2.500 21.500v-3a1.500 1.500 0 0 1 1.500-1.500h28a1.500 1.500 0 0 1 1.500 1.500v3z" fill="#35b35a"/><path d="M8.500 18v-12.500h11l7.500 7v5.500z" fill="#cdebd6" stroke="#35b35a" stroke-width="2.600" stroke-linejoin="round"/><path d="M16.500 6v8.500h10" fill="#fafafa" stroke="#35b35a" stroke-width="1.800"/><path d="M32 3.500l1 3l3 1l-3 1l-1 3l-1-3l-3-1l3-1zM24.500 1l.7 1.800l1.800.7l-1.800.7l-.7 1.800l-.7-1.800l-1.800-.7l1.800-.7zM4.500 8l.6 1.600l1.600.6l-1.600.6l-.6 1.600l-.6-1.600l-1.600-.6l1.600-.6z" fill="#35b35a"/></svg>
<svg class="ic" style="left:1875px;top:926px" width="22" height="12" viewBox="0 0 22 12" ><path d="M2.200 2l8.800 7.500l8.800-7.500" fill="none" stroke="#6f6f6f" stroke-width="3.100" stroke-linecap="round" stroke-linejoin="round"/></svg>
<svg class="ic" style="left:1877px;top:971px" width="26" height="28" viewBox="0 0 26 28" ><path d="M3.700 3v22" stroke="#6f6f6f" stroke-width="3.600" stroke-linecap="round"/><path d="M10 14h11.500M16.500 8.500l5.500 5.500l-5.500 5.500" fill="none" stroke="#6f6f6f" stroke-width="3" stroke-linecap="round" stroke-linejoin="round"/></svg>

<div id="find">
 <span style="left:16px;top:8px;font-size:20px;line-height:26px;font-weight:bold;color:#fff">Find</span>
 <span style="left:68px;top:8px;font-size:20px;line-height:26px;color:#c8c8c8">(1/1)</span>
 <svg style="left:301px;top:12px" width="16" height="16"><path d="M2 2l11.500 11.500M13.500 2l-11.500 11.500" stroke="#9a9a9a" stroke-width="2.200"/></svg>
 <div class="inp"><span style="left:8px;top:6px;font-size:20.500px;line-height:26px;color:#222">WB3020</span><div style="left:85px;top:7px;width:1px;height:25px;background:#000"></div>
 <svg style="left:277px;top:9px" width="22" height="22" viewBox="0 0 22 22"><g fill="#6a6a6a"><circle cx="11" cy="11" r="7"/><rect x="9" y="0.500" width="4" height="21" rx="0.800"/><rect x="9" y="0.500" width="4" height="21" rx="0.800" transform="rotate(45 11 11)"/><rect x="9" y="0.500" width="4" height="21" rx="0.800" transform="rotate(90 11 11)"/><rect x="9" y="0.500" width="4" height="21" rx="0.800" transform="rotate(135 11 11)"/></g><circle cx="11" cy="11" r="3.300" fill="#fff"/></svg></div>
 <div class="btn" style="left:17px">Previous</div><div class="btn" style="left:176px;font-size:21px">Next</div>
 <svg style="left:20px;top:170px" width="8" height="14"><path d="M1 1l6 6l-6 6z" fill="#6e6e6e"/></svg>
 <span style="left:36px;top:165px;font-size:20px;line-height:26px;font-weight:bold;color:#fff">Replace with</span>
</div>
<div class="red" style="left:1333.4px;top:241.4px;width:58.6px;height:60.2px;line-height:57.2px;font-size:42px"><span style="position:static;display:inline-block;transform:translateX(-1.8px) scaleX(0.9)">2</span></div>
<div class="red" style="left:1507.6px;top:224.1px;width:52.8px;height:52.8px;line-height:49.8px;font-size:42px"><span style="position:static;display:inline-block;transform:translateX(-0.7px) scaleX(0.9)">3</span></div>
<div class="red" style="left:424.9px;top:605.0px;width:51.8px;height:52.2px;line-height:49.2px;font-size:41px"><span style="position:static;display:inline-block;transform:translateX(-0.5px) scaleX(0.92)">4</span></div>

<div id="taskbar"><div style="left:671px;top:0;width:73px;height:4px;background:#a0581e"></div><div style="left:896px;top:0;width:73px;height:4px;background:#3a3a3a"></div></div>
</div></body></html>
